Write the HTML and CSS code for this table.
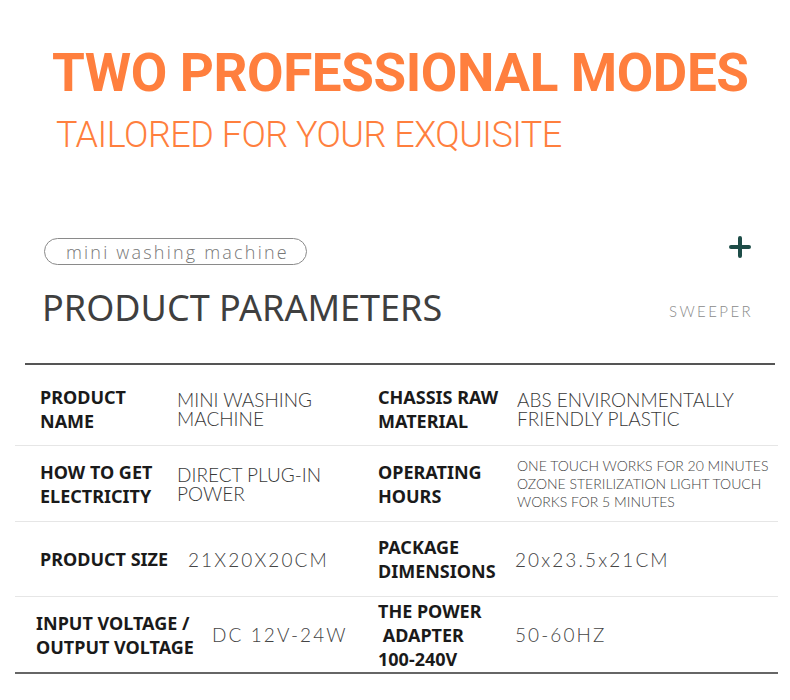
FILE: index.html
```html
<!DOCTYPE html>
<html>
<head>
<meta charset="utf-8">
<link rel="stylesheet" href="styles.css">
</head>
<body>
<div class="page">
  <header class="hero">
    <h1 class="hero-title">TWO PROFESSIONAL MODES</h1>
    <p class="hero-sub">TAILORED FOR YOUR EXQUISITE</p>
  </header>

  <section class="params">
    <div class="params-top">
      <span class="pill">mini washing machine</span>
      <svg class="plus" width="22" height="22" viewBox="0 0 22 22"><path d="M11 2v18M2 11h18" stroke="#1e4d48" stroke-width="4" stroke-linecap="round"/></svg>
    </div>
    <div class="params-head">
      <h2 class="params-title">PRODUCT PARAMETERS</h2>
      <span class="params-tag">SWEEPER</span>
    </div>

    <div class="table">
      <div class="row r1">
        <div class="lab">PRODUCT<br>NAME</div>
        <div class="val">MINI WASHING<br>MACHINE</div>
        <div class="lab">CHASSIS RAW<br>MATERIAL</div>
        <div class="val">ABS ENVIRONMENTALLY<br>FRIENDLY PLASTIC</div>
      </div>
      <div class="row r2">
        <div class="lab">HOW TO GET<br>ELECTRICITY</div>
        <div class="val">DIRECT PLUG-IN<br>POWER</div>
        <div class="lab">OPERATING<br>HOURS</div>
        <div class="val small">ONE TOUCH WORKS FOR 20 MINUTES<br>OZONE STERILIZATION LIGHT TOUCH<br>WORKS FOR 5 MINUTES</div>
      </div>
      <div class="row r3">
        <div class="lab">PRODUCT SIZE</div>
        <div class="val spaced v1">21X20X20CM</div>
        <div class="lab">PACKAGE<br>DIMENSIONS</div>
        <div class="val spaced v2">20x23.5x21CM</div>
      </div>
      <div class="row r4">
        <div class="lab l1">INPUT VOLTAGE /<br>OUTPUT VOLTAGE</div>
        <div class="val spaced v1">DC 12V-24W</div>
        <div class="lab">THE POWER<br>&nbsp;ADAPTER<br>100-240V</div>
        <div class="val spaced v2">50-60HZ</div>
      </div>
    </div>
  </section>
</div>
</body>
</html>
```

FILE: styles.css
```css
* { box-sizing: border-box; margin: 0; padding: 0; }
html, body { background: #fff; }
body { width: 790px; height: 700px; overflow: hidden; }
.page { display: flex; flex-direction: column; }

.hero { padding: 42px 0 0 52px; display: flex; flex-direction: column; }
.hero-title {
  font-family: "Roboto", "Lato", sans-serif;
  font-weight: 700;
  font-size: 53px;
  letter-spacing: -0.4px;
  line-height: 62px;
  color: #ff7f3e;
  white-space: nowrap;
}
.hero-sub {
  font-family: "Roboto", "Lato", sans-serif;
  font-weight: 300;
  font-size: 36px;
  letter-spacing: -0.5px;
  line-height: 44px;
  color: #ff7f3e;
  margin: 9px 0 0 4px;
  white-space: nowrap;
}

.params { display: flex; flex-direction: column; margin-top: 81px; }
.params-top { display: flex; justify-content: space-between; align-items: center; padding: 0 39px 0 44px; }
.pill {
  font-family: "Open Sans", "Noto Sans", sans-serif;
  font-weight: 300;
  font-size: 18px;
  line-height: 24px;
  color: #777;
  letter-spacing: 2.2px;
  border: 1px solid #8a8a8a;
  border-radius: 14px;
  padding: 0 17px 0 21px;
  height: 27px;
  display: flex; align-items: center;
}
.plus { display: block; margin-top: -9px; }
.params-head { display: flex; justify-content: space-between; align-items: center; padding: 18px 37px 0 42px; }
.params-title {
  font-family: "Noto Sans", "Open Sans", sans-serif;
  font-weight: 400;
  font-size: 36px;
  line-height: 50px;
  color: #3f3f3f;
}
.params-tag {
  font-family: "Lato", sans-serif;
  font-weight: 300;
  font-size: 15px;
  letter-spacing: 2.4px;
  color: #8a8a8a;
  margin-top: 6px;
}

.table { margin: 30px 12px 0 15px; display: flex; flex-direction: column; border-bottom: 2px solid #666; }
.table::before { content: ""; display: block; height: 2px; background: #555; margin: 0 3px 0 10px; }
.row {
  display: grid;
  grid-template-columns: 137px 201px 139px 1fr;
  align-items: center;
  padding-left: 25px;
  border-bottom: 1px solid #e6e6e6;
}
.row:last-child { border-bottom: none; }
.r1 { height: 81px; padding-top: 7px; }
.r2 { height: 76px; }
.r3 { height: 75px; }
.r4 { height: 75px; }

.lab {
  font-family: "Noto Sans", "Open Sans", sans-serif;
  font-weight: 700;
  font-size: 18px;
  line-height: 24px;
  color: #1a1a1a;
  white-space: nowrap;
}
.val {
  font-family: "Lato", "Open Sans", sans-serif;
  font-weight: 300;
  font-size: 19px;
  line-height: 19px;
  color: #383838;
  white-space: nowrap;
}
.val.small { font-size: 14px; line-height: 18px; color: #444; }
.val.spaced { letter-spacing: 2.1px; color: #444; }
.r3 .v1 { padding-left: 11px; }
.r3 .v2, .r4 .v2 { margin-left: -2px; }
.r4 .l1 { margin-left: -4px; }
.r4 .v1 { padding-left: 35px; }
```
